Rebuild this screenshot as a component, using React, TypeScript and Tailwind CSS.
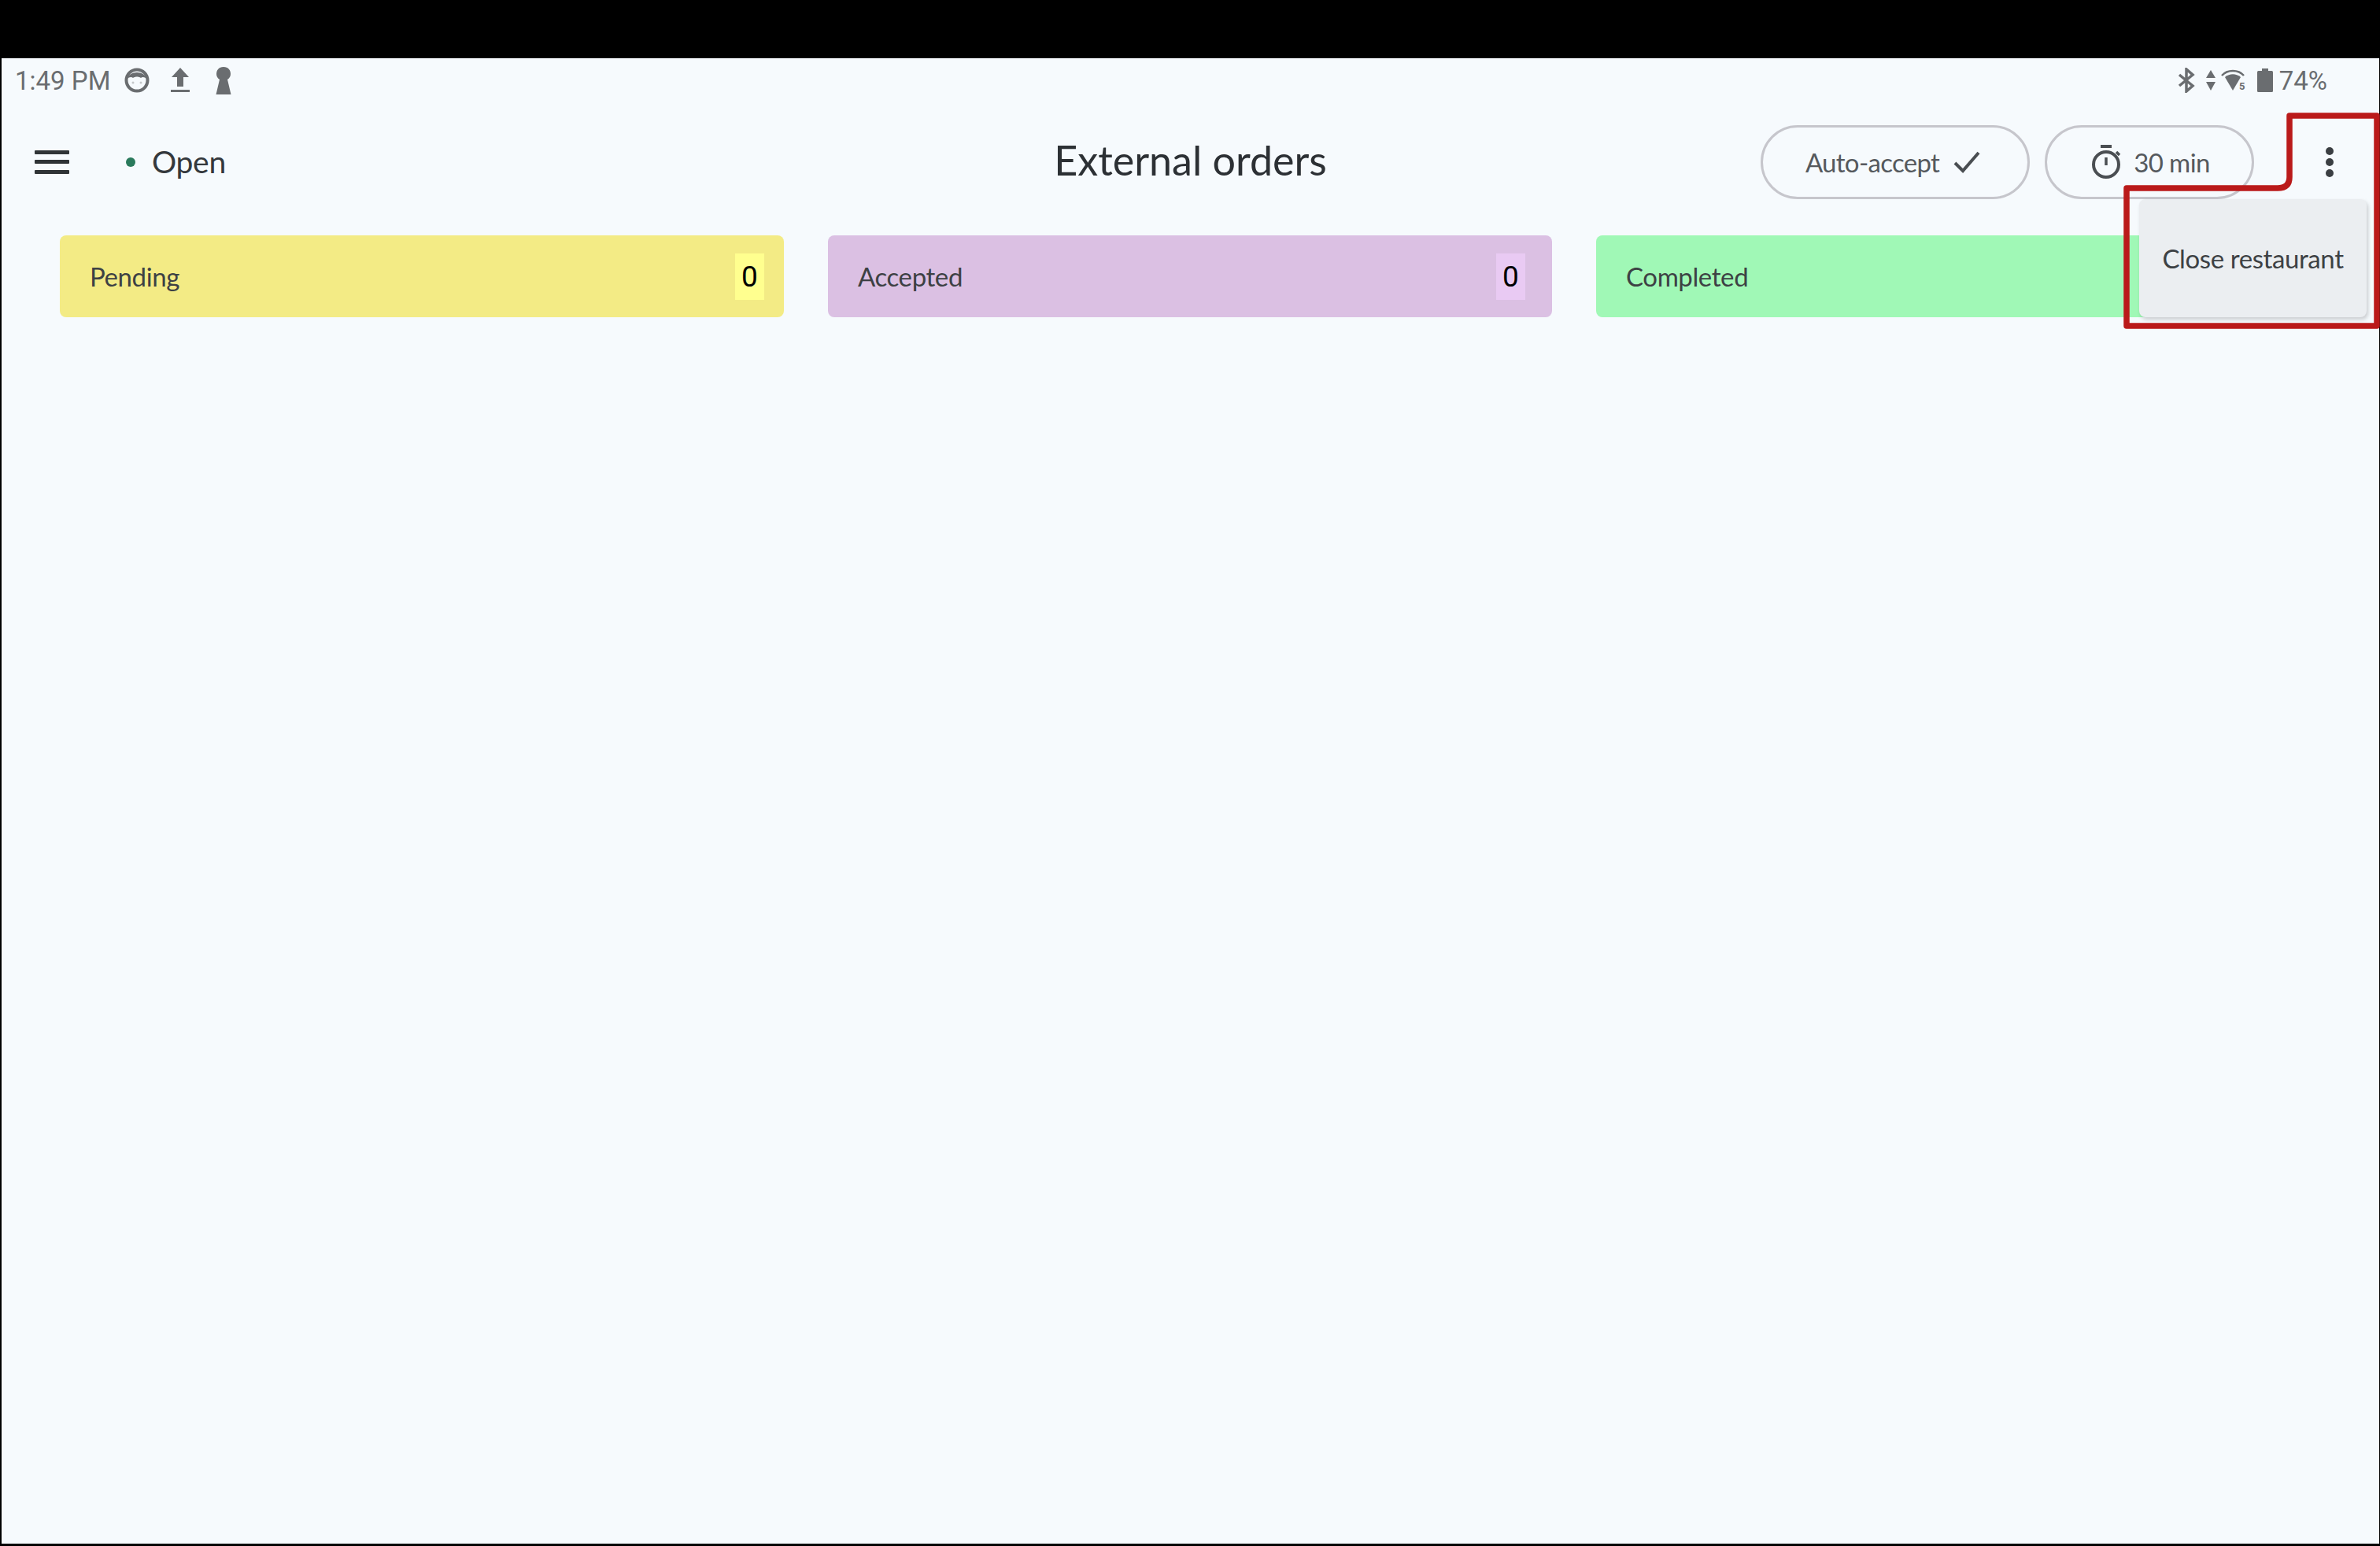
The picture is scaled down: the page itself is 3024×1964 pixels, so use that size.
import React from 'react';

const lato = "font-['Lato','Noto_Sans',sans-serif]";

const FaceIcon = () => (
  <svg width="32" height="32" viewBox="0 0 32 32" fill="none">
    <circle cx="16" cy="16" r="13.5" stroke="#6a6d70" strokeWidth="4" />
    <path d="M3 15 C6 3 26 3 29 15 C27 12 23 11 21 13 C18 11 14 11 11 13 C9 11 5 12 3 15 Z" fill="#6a6d70" />
    <circle cx="11" cy="19" r="1.5" fill="#c5c8ca" />
    <circle cx="21" cy="19" r="1.5" fill="#c5c8ca" />
  </svg>
);

const UploadIcon = () => (
  <svg width="26" height="34" viewBox="0 0 26 34" fill="#6a6d70">
    <path d="M13 1 L24 13 H17 V25 H9 V13 H2 Z" />
    <rect x="1" y="29" width="24" height="3" />
  </svg>
);

const KeyholeIcon = () => (
  <svg width="20" height="35" viewBox="0 0 20 35" fill="#6a6d70">
    <path d="M10 0 C16 0 19 4 19 9 C19 12 17.5 14.5 15 16 L19.5 35 H0.5 L5 16 C2.5 14.5 1 12 1 9 C1 4 4 0 10 0 Z" />
  </svg>
);

const BluetoothIcon = () => (
  <svg width="22" height="32" viewBox="0 0 22 32" fill="none" stroke="#6a6d70" strokeWidth="3.5">
    <path d="M2 9 L19 23 L11 30 V2 L19 9 L2 23" />
  </svg>
);

const DataIcon = () => (
  <svg width="12" height="26" viewBox="0 0 12 26" fill="#6a6d70">
    <path d="M6 0 L12 10 H0 Z" />
    <path d="M6 26 L12 15 H0 Z" />
  </svg>
);

const WifiIcon = () => (
  <svg width="32" height="28" viewBox="0 0 32 28" fill="none">
    <path d="M1 8 C8 0 22 0 29 8" stroke="#6a6d70" strokeWidth="2.5" />
    <path d="M5 10 C11 5 19 5 25 10 L15 27 Z" fill="#6a6d70" />
    <text x="23" y="26" fontSize="13" fontWeight="700" fill="#6a6d70" fontFamily="Roboto, sans-serif">5</text>
  </svg>
);

const BatteryIcon = () => (
  <svg width="20" height="30" viewBox="0 0 20 30" fill="#6a6d70">
    <rect x="6" y="0" width="8" height="3" />
    <rect x="0" y="3" width="20" height="27" rx="1.5" />
  </svg>
);

const MenuIcon = () => (
  <svg width="44" height="30" viewBox="0 0 44 30" fill="#2f3336">
    <rect x="0" y="0" width="44" height="5" rx="1" />
    <rect x="0" y="12" width="44" height="5" rx="1" />
    <rect x="0" y="25" width="44" height="5" rx="1" />
  </svg>
);

const StopwatchIcon = () => (
  <svg width="38" height="44" viewBox="0 0 38 44" fill="none" stroke="#4a4e52">
    <path d="M12 2 H26" strokeWidth="4" />
    <circle cx="19" cy="25" r="16" strokeWidth="4" />
    <path d="M19 16 V26" strokeWidth="3.5" />
    <path d="M32 9 L36 13" strokeWidth="3.5" />
  </svg>
);

const CheckIcon = () => (
  <svg width="34" height="28" viewBox="0 0 34 28" fill="none" stroke="#4a4e52" strokeWidth="4">
    <path d="M2 15 L12 25 L32 2" />
  </svg>
);

const KebabIcon = () => (
  <svg width="12" height="40" viewBox="0 0 12 40" fill="#3a3e42">
    <circle cx="6" cy="6" r="5" />
    <circle cx="6" cy="20" r="5" />
    <circle cx="6" cy="34" r="5" />
  </svg>
);

const StatusBar = () => (
  <div className="flex h-[56px] shrink-0 items-center justify-between pl-[17px] pr-[66px] text-[#6a6d70]">
    <div className="flex items-center">
      <span className="font-['Roboto',sans-serif] text-[33px] leading-none">1:49 PM</span>
      <span className="ml-[18px] flex"><FaceIcon /></span>
      <span className="ml-[26px] flex"><UploadIcon /></span>
      <span className="ml-[32px] flex"><KeyholeIcon /></span>
    </div>
    <div className="flex items-center">
      <BluetoothIcon />
      <span className="ml-[14px] flex"><DataIcon /></span>
      <span className="ml-[7px] flex"><WifiIcon /></span>
      <span className="ml-[14px] flex"><BatteryIcon /></span>
      <span className="ml-[8px] font-['Roboto',sans-serif] text-[33px] leading-none">74%</span>
    </div>
  </div>
);

const Header = () => (
  <div className="grid h-[152px] shrink-0 grid-cols-[1fr_auto_1fr] items-center">
    <div className="flex items-center pl-[42px]">
      <MenuIcon />
      <span className="ml-[72px] h-[12px] w-[12px] rounded-full bg-[#2a7a5c]" />
      <span className={`-mt-[2px] ml-[21px] text-[39px] leading-none tracking-[-0.3px] text-[#34383c] ${lato}`}>Open</span>
    </div>
    <h1 className={`-mt-[6px] text-[52px] font-normal leading-none text-[#2c3034] ${lato}`}>External orders</h1>
    <div className="flex items-center justify-end pr-[57px]">
      <div className="flex h-[94px] w-[342px] items-center justify-center gap-[18px] rounded-full border-[3px] border-[#c6c6cc] pr-[6px]">
        <span className={`text-[33px] leading-none tracking-[-0.7px] text-[#55595d] ${lato}`}>Auto-accept</span>
        <CheckIcon />
      </div>
      <div className="ml-[19px] flex h-[94px] w-[266px] items-center justify-center gap-[16px] rounded-full border-[3px] border-[#c6c6cc] pl-[3px]">
        <StopwatchIcon />
        <span className={`text-[33px] leading-none tracking-[-0.6px] text-[#55595d] ${lato}`}>30 min</span>
      </div>
      <div className="ml-[90px] flex"><KebabIcon /></div>
    </div>
  </div>
);

const StatusCard = ({ label, count, cardClass, badgeClass }: { label: string; count?: number; cardClass: string; badgeClass?: string }) => (
  <div className={`flex h-[104px] items-center justify-between rounded-[8px] pl-[38px] ${cardClass}`}>
    <span className={`text-[33px] leading-none tracking-[-0.4px] text-[#3d4144] ${lato}`}>{label}</span>
    {count !== undefined && (
      <span className={`flex h-[59px] w-[37px] items-center justify-center font-['Roboto',sans-serif] text-[37px] font-normal leading-none text-black ${badgeClass}`}>
        {count}
      </span>
    )}
  </div>
);

const App: React.FC = () => {
  return (
    <div className="flex h-[1964px] w-[3024px] flex-col bg-black pb-[3px] pl-[2px] pr-px pt-[74px]">
      <div className="relative flex flex-1 flex-col bg-[#f6fafd]">
        <StatusBar />
        <Header />
        <div className="mt-[17px] grid grid-cols-3 gap-[56px] pl-[74px] pr-[75px]">
          <StatusCard label="Pending" count={0} cardClass="bg-[#f3eb85] pr-[25px]" badgeClass="bg-[#ffff8f]" />
          <StatusCard label="Accepted" count={0} cardClass="bg-[#dbc0e3] pr-[34px]" badgeClass="bg-[#e9caf3]" />
          <StatusCard label="Completed" cardClass="bg-[#a0f8b6]" />
        </div>

        {/* dropdown, open over the third card */}
        <div className="absolute left-[2716px] top-[179px] flex h-[150px] w-[289px] items-center justify-center rounded-[8px] bg-[#ebeef1] shadow-[2px_3px_5px_rgba(0,0,0,0.18)]">
          <span className={`text-[33px] leading-none tracking-[-0.4px] text-[#3d4144] ${lato}`}>Close restaurant</span>
        </div>

        {/* red annotation around the menu */}
        <svg className="absolute left-[2696px] top-[69px]" width="326" height="275" viewBox="0 0 326 275" fill="none">
          <path
            d="M211 4 H322 V271 H4 V96 H196 Q211 96 211 82 Z"
            stroke="#ba1a1a"
            strokeWidth="7.5"
            strokeLinejoin="round"
          />
        </svg>
      </div>
    </div>
  );
};

export default App;
